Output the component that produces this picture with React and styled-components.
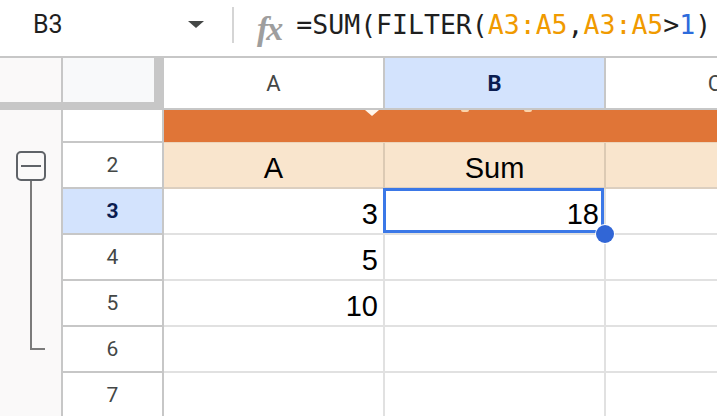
import React from 'react';
import styled, { createGlobalStyle, css } from 'styled-components';

const Global = createGlobalStyle`
  html, body { margin: 0; padding: 0; background: #fff; overflow: hidden; }
  body { font-family: Roboto, "Liberation Sans", Arial, sans-serif; }
`;

const Page = styled.div`
  width: 717px;
  height: 416px;
  overflow: hidden;
  background: #fff;
`;

const FormulaBar = styled.div`
  display: flex;
  align-items: center;
  height: 58px;
  box-sizing: border-box;
  padding-bottom: 7px;
  border-bottom: 2px solid #c7c7c7;
  white-space: nowrap;
`;

const NameBox = styled.div`
  width: 232px;
  box-sizing: border-box;
  padding: 0 28px 0 33px;
  display: flex;
  align-items: center;
  justify-content: space-between;
  flex: none;
`;

const NameText = styled.span`
  font-family: Roboto, "Liberation Sans", sans-serif;
  font-size: 25px;
  color: #1f1f1f;
`;

const Caret = styled.span`
  width: 0;
  height: 0;
  border-left: 8px solid transparent;
  border-right: 8px solid transparent;
  border-top: 7px solid #444746;
`;

const Divider = styled.span`
  width: 2px;
  height: 36px;
  background: #d5d5d5;
  flex: none;
`;

const FxIcon = styled.span`
  margin-left: 23px;
  font-family: "Liberation Serif", serif;
  font-style: italic;
  font-weight: 700;
  font-size: 34px;
  line-height: 1;
  letter-spacing: -2px;
  color: #9e9e9e;
  transform: translateY(4px);
  flex: none;
`;

const Formula = styled.span`
  margin-left: 15px;
  font-family: "DejaVu Sans Mono", "Liberation Mono", monospace;
  font-size: 26.5px;
  color: #1f1f1f;
`;

const Token = styled.span`
  color: ${p => (p.$kind === 'range' ? '#f09a00' : p.$kind === 'num' ? '#2d6bdc' : '#1f1f1f')};
`;

const Sheet = styled.div`
  display: grid;
  grid-template-columns: 63px 101px 221px 221px 220px;
  grid-template-rows: 52px 33px repeat(6, 46px);
  width: max-content;
`;

const GutterHead = styled.div`
  box-sizing: border-box;
  background: #faf9f9;
  border-right: 2px solid #c7c7c7;
  border-bottom: 8px solid #c7c7c7;
`;

const Corner = styled.div`
  box-sizing: border-box;
  background: #f8f9fa;
  border-right: 10px solid #c7c7c7;
  border-bottom: 8px solid #c7c7c7;
`;

const ColHeader = styled.div`
  box-sizing: border-box;
  display: flex;
  align-items: center;
  justify-content: center;
  font-family: Roboto, "Liberation Sans", sans-serif;
  font-size: 22px;
  color: ${p => (p.$selected ? '#0b1d51' : '#444746')};
  font-weight: ${p => (p.$selected ? 700 : 400)};
  background: ${p => (p.$selected ? '#d3e3fd' : '#fff')};
  border-right: 2px solid #c7c7c7;
  border-bottom: 2px solid #c7c7c7;
`;

const Gutter = styled.div`
  grid-column: 1;
  grid-row: 2 / span 7;
  box-sizing: border-box;
  background: #faf9f9;
  border-right: 2px solid #c7c7c7;
  display: flex;
  flex-direction: column;
  align-items: flex-start;
  padding: 41px 0 0 16px;
`;

const CollapseBox = styled.div`
  box-sizing: border-box;
  width: 30px;
  height: 30px;
  border: 2px solid #5f6368;
  border-radius: 5px;
  display: flex;
  align-items: center;
  justify-content: center;
  flex: none;
`;

const Minus = styled.span`
  width: 20px;
  height: 2px;
  background: #5f6368;
`;

const Bracket = styled.div`
  box-sizing: border-box;
  margin-left: 14px;
  width: 15px;
  height: 169px;
  border-left: 2px solid #7b7b7b;
  border-bottom: 2px solid #7b7b7b;
  flex: none;
`;

const RowHeader = styled.div`
  box-sizing: border-box;
  display: flex;
  align-items: center;
  justify-content: center;
  font-family: Roboto, "Liberation Sans", sans-serif;
  font-size: 21px;
  color: ${p => (p.$selected ? '#0b1d51' : '#444746')};
  font-weight: ${p => (p.$selected ? 700 : 400)};
  background: ${p => (p.$selected ? '#d3e3fd' : '#fff')};
  border-right: 2px solid #c7c7c7;
  border-bottom: 2px solid #c7c7c7;
`;

const Band = styled.div`
  grid-column: 3 / span 3;
  position: relative;
  box-sizing: border-box;
  background: #e07537;
  border-bottom: 1px solid #ecd4ba;
`;

const Notch = styled.span`
  position: absolute;
  top: 0;
  left: 201px;
  width: 0;
  height: 0;
  border-left: 7px solid transparent;
  border-right: 7px solid transparent;
  border-top: 6px solid #fff6ec;
`;

const Speck = styled.span`
  position: absolute;
  top: 0;
  left: ${p => p.$x}px;
  width: 8px;
  height: 2px;
  border-radius: 0 0 3px 3px;
  background: rgba(255, 228, 190, 0.85);
`;

const Cell = styled.div`
  box-sizing: border-box;
  position: relative;
  display: flex;
  align-items: flex-end;
  justify-content: ${p => (p.$align === 'center' ? 'center' : 'flex-end')};
  padding: 0 5px 3px;
  font-family: "Liberation Sans", Arial, sans-serif;
  font-size: 29px;
  line-height: 32px;
  color: #000;
  background: ${p => (p.$band ? '#f9e5cd' : '#fff')};
  border-right: 2px solid ${p => (p.$band ? '#dccab4' : '#e1e1e1')};
  border-bottom: 2px solid ${p => (p.$band ? '#dccfc0' : '#e1e1e1')};
  ${p =>
    p.$active &&
    css`
      z-index: 2;
      &::after {
        content: '';
        position: absolute;
        left: -2px;
        top: -1px;
        right: 0;
        bottom: 0;
        border: 3px solid #3b78e7;
        pointer-events: none;
      }
      &::before {
        content: '';
        position: absolute;
        right: -10px;
        bottom: -10px;
        width: 18px;
        height: 18px;
        border-radius: 50%;
        background: #3166d6;
        box-shadow: 0 0 0 1px #fff;
        z-index: 1;
      }
    `}
`;

const tokens = [
  { t: '=SUM(FILTER(' },
  { t: 'A3:A5', k: 'range' },
  { t: ',' },
  { t: 'A3:A5', k: 'range' },
  { t: '>' },
  { t: '1', k: 'num' },
  { t: ')' },
];

const rows = [
  { n: 3, a: '3', b: '18', selected: true },
  { n: 4, a: '5', b: '' },
  { n: 5, a: '10', b: '' },
  { n: 6, a: '', b: '' },
  { n: 7, a: '', b: '' },
];

export default function App() {
  return (
    <Page>
      <Global />
      <FormulaBar>
        <NameBox>
          <NameText>B3</NameText>
          <Caret />
        </NameBox>
        <Divider />
        <FxIcon>fx</FxIcon>
        <Formula>
          {tokens.map((tk, i) => (
            <Token key={i} $kind={tk.k}>{tk.t}</Token>
          ))}
        </Formula>
      </FormulaBar>
      <Sheet>
        <GutterHead />
        <Corner />
        <ColHeader>A</ColHeader>
        <ColHeader $selected>B</ColHeader>
        <ColHeader>C</ColHeader>

        <Gutter>
          <CollapseBox>
            <Minus />
          </CollapseBox>
          <Bracket />
        </Gutter>

        <RowHeader />
        <Band>
          <Notch />
          <Speck $x={297} />
          <Speck $x={360} />
        </Band>

        <RowHeader>2</RowHeader>
        <Cell $band $align="center">A</Cell>
        <Cell $band $align="center">Sum</Cell>
        <Cell $band />

        {rows.map(r => (
          <React.Fragment key={r.n}>
            <RowHeader $selected={r.selected}>{r.n}</RowHeader>
            <Cell>{r.a}</Cell>
            <Cell $active={r.selected}>{r.b}</Cell>
            <Cell />
          </React.Fragment>
        ))}
      </Sheet>
    </Page>
  );
}
